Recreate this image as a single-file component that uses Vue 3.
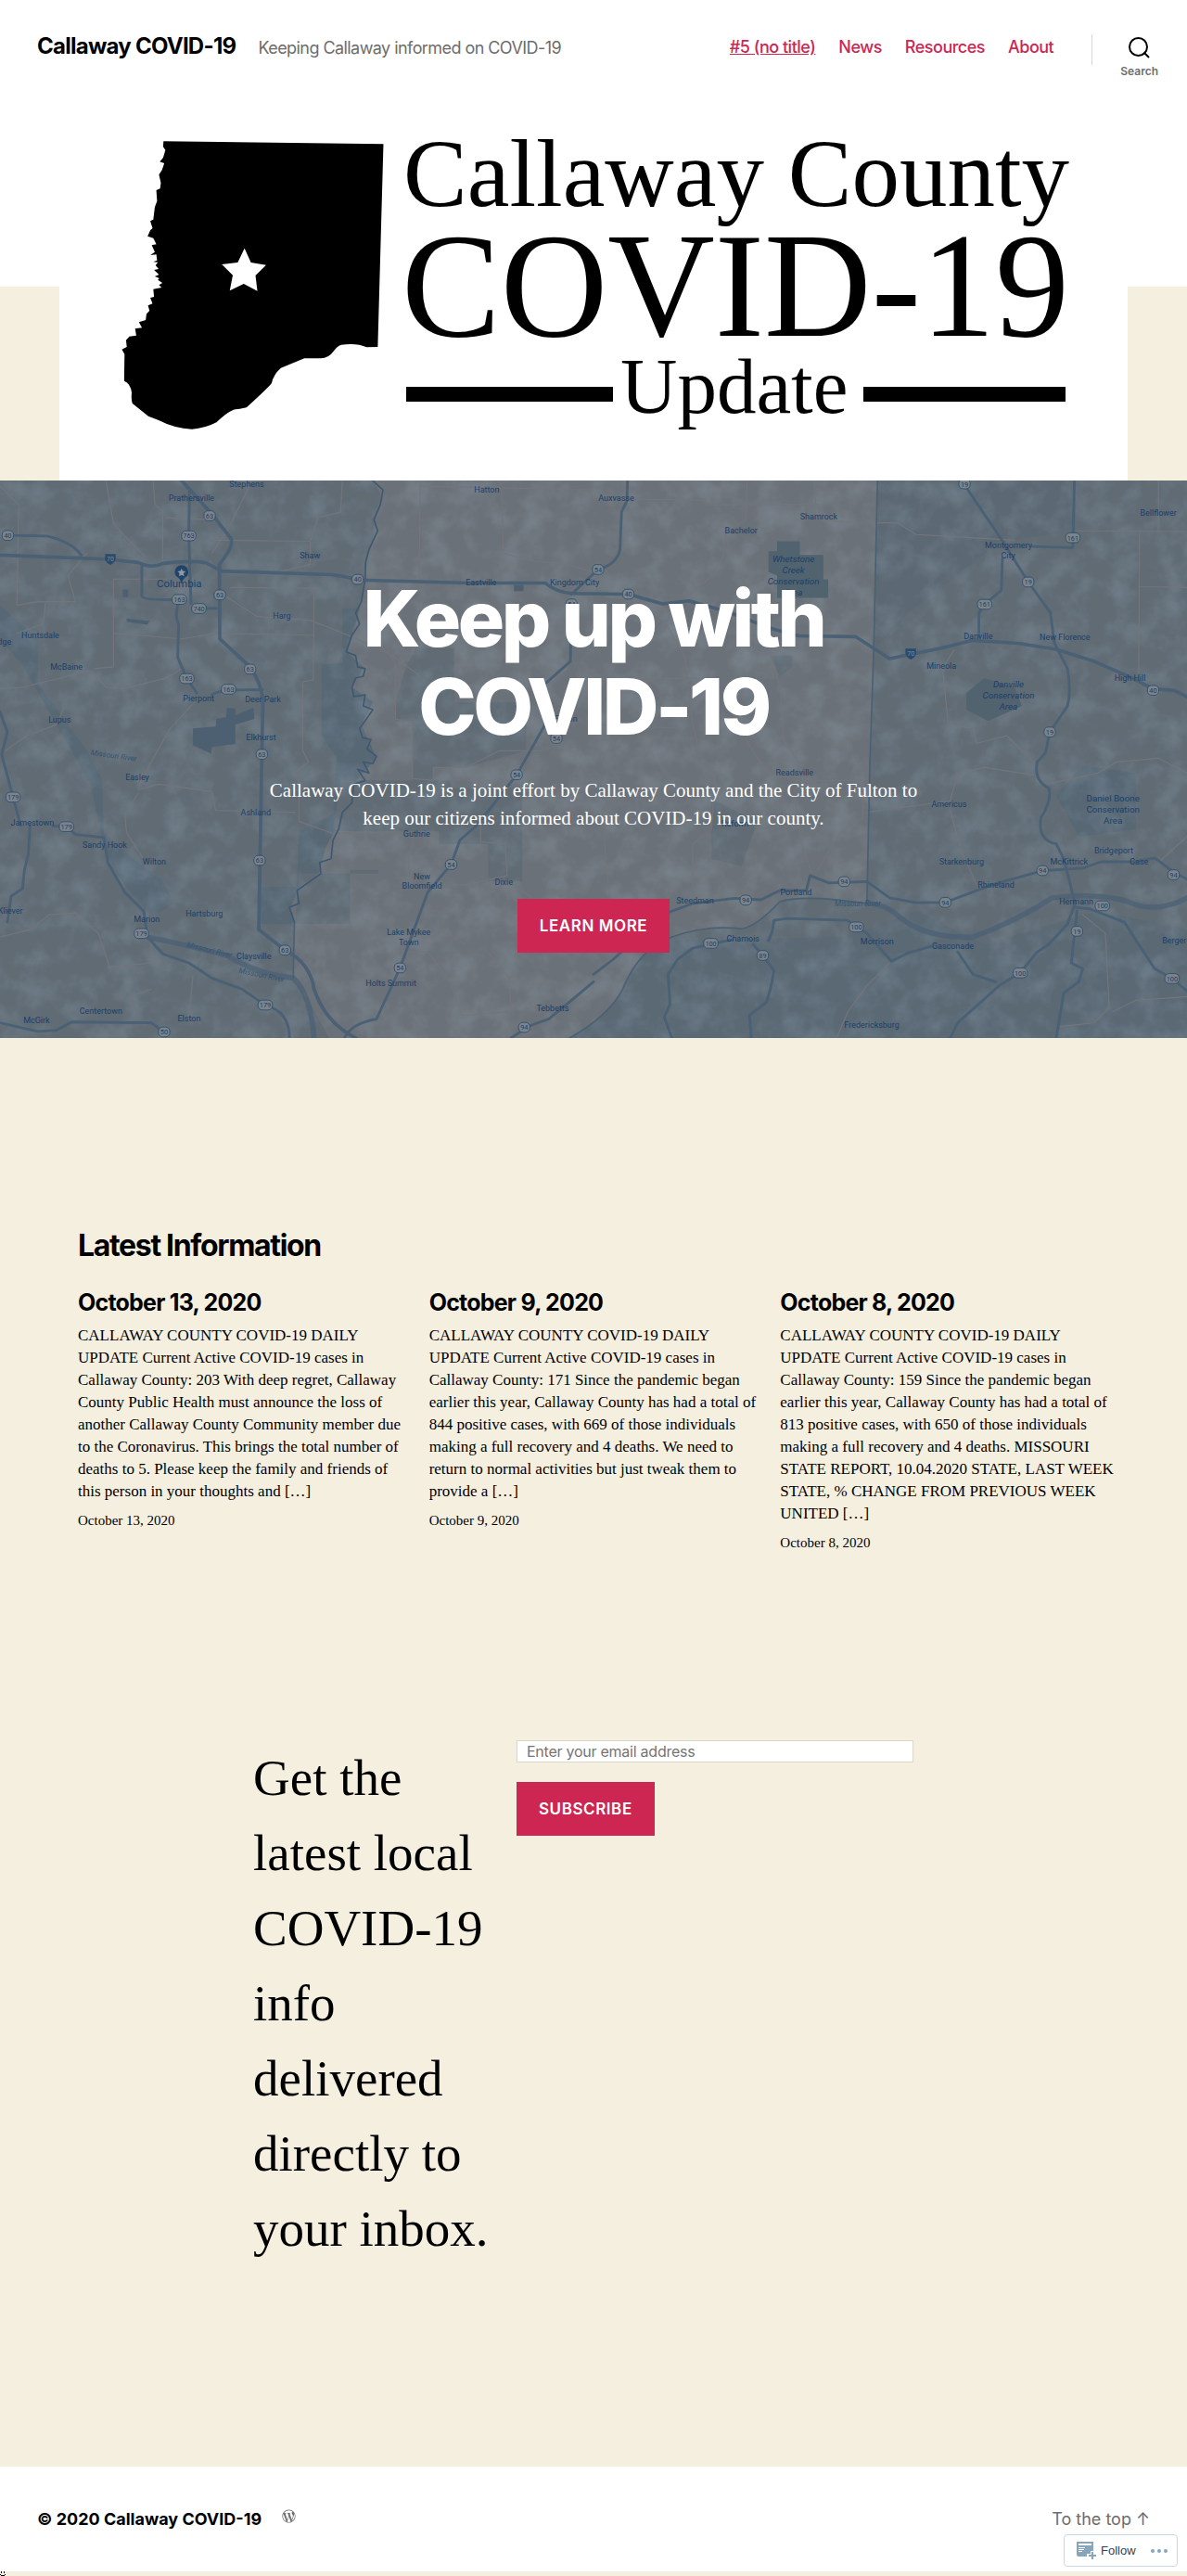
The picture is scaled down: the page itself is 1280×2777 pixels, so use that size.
<script setup>
const navLinks = [
  { text: '#5 (no title)', current: true },
  { text: 'News' },
  { text: 'Resources' },
  { text: 'About' },
]

const posts = [
  {
    title: 'October 13, 2020',
    excerpt:
      'CALLAWAY COUNTY COVID-19 DAILY UPDATE Current Active COVID-19 cases in Callaway County: 203 With deep regret, Callaway County Public Health must announce the loss of another Callaway County Community member due to the Coronavirus. This brings the total number of deaths to 5. Please keep the family and friends of this person in your thoughts and […]',
  },
  {
    title: 'October 9, 2020',
    excerpt:
      'CALLAWAY COUNTY COVID-19 DAILY UPDATE Current Active COVID-19 cases in Callaway County: 171 Since the pandemic began earlier this year, Callaway County has had a total of 844 positive cases, with 669 of those individuals making a full recovery and 4 deaths. We need to return to normal activities but just tweak them to provide a […]',
  },
  {
    title: 'October 8, 2020',
    excerpt:
      'CALLAWAY COUNTY COVID-19 DAILY UPDATE Current Active COVID-19 cases in Callaway County: 159 Since the pandemic began earlier this year, Callaway County has had a total of 813 positive cases, with 650 of those individuals making a full recovery and 4 deaths. MISSOURI STATE REPORT, 10.04.2020 STATE, LAST WEEK STATE, % CHANGE FROM PREVIOUS WEEK UNITED […]',
  },
]

/* Latitude on the map sheet to a y inside the drawing */
const lat = (y) => Math.round((y - 45) * 0.984)

/* Map data: [text, centre x, baseline y] in map units */
const towns = [
  ['Stephens', 652, 62], ['Prathersville', 506, 101], ['Shaw', 819, 254], ['Hatton', 1286, 79],
  ['Eastville', 1271, 326], ['Kingdom City', 1518, 326], ['Harg', 745, 416], ['Huntsdale', 107, 468],
  ['dge', 12, 486], ['McBaine', 176, 553], ['Pierpont', 525, 638], ['Deer Park', 695, 641],
  ['Lupus', 158, 695], ['Elkhurst', 690, 741], ['Fulton', 1495, 693], ['Easley', 363, 848],
  ['Ashland', 676, 942], ['Jamestown', 86, 972], ['Guthrie', 1101, 1001], ['Sandy Hook', 277, 1030],
  ['Wilton', 408, 1076], ['New', 1115, 1115], ['Bloomfield', 1115, 1140], ['Dixie', 1331, 1131],
  ['Kliever', 28, 1207], ['Marion', 388, 1230], ['Hartsburg', 540, 1215], ['Lake Mykee', 1080, 1266],
  ['Town', 1080, 1291], ['Claysville', 671, 1330], ['Holts Summit', 1033, 1402], ['Tebbetts', 1460, 1470],
  ['Centertown', 267, 1476], ['McGirk', 97, 1502], ['Elston', 500, 1496],
  ['Auxvasse', 1628, 101], ['Bachelor', 1958, 186], ['Shamrock', 2163, 151], ['Montgomery', 2664, 228],
  ['City', 2663, 254], ['Bellflower', 3060, 139], ['Danville', 2584, 471], ['New Florence', 2813, 473],
  ['Mineola', 2487, 549], ['High Hill', 2985, 582], ['Readsville', 2099, 836], ['Americus', 2507, 921],
  ['Reform', 1942, 973], ['Starkenburg', 2540, 1074], ['McKittrick', 2824, 1076], ['Bridgeport', 2942, 1046],
  ['Case', 3009, 1076], ['Rhineland', 2631, 1136], ['Portland', 2103, 1158], ['Steedman', 1836, 1181],
  ['Hermann', 2843, 1183], ['Chamois', 1963, 1283], ['Morrison', 2317, 1289], ['Gasconade', 2517, 1303],
  ['Berger', 3102, 1286], ['Fredericksburg', 2303, 1514],
]
const areas = [
  ['Whetstone', 2096, 264], ['Creek', 2096, 294], ['Conservation', 2096, 323], ['Area', 2096, 353],
  ['Danville', 2664, 599], ['Conservation', 2664, 629], ['Area', 2664, 659],
]
const boone = [['Daniel Boone', 2940, 907], ['Conservation', 2940, 937], ['Area', 2940, 967]]
const shields = [
  ['63', 554, 140], ['763', 499, 193], ['40', 21, 192], ['40', 945, 310], ['163', 474, 364], ['740', 526, 388],
  ['63', 581, 352], ['63', 661, 551], ['163', 494, 576], ['163', 604, 605], ['63', 692, 780], ['54', 1470, 737],
  ['54', 1365, 835], ['179', 35, 895], ['179', 176, 974], ['63', 686, 1064], ['54', 1192, 1075], ['179', 374, 1260],
  ['63', 753, 1305], ['54', 1057, 1353], ['179', 701, 1453], ['50', 434, 1525], ['94', 1385, 1512], ['54', 1510, 376],
  ['54', 1580, 284], ['40', 1660, 350], ['19', 2548, 54], ['161', 2834, 198], ['19', 2716, 317], ['161', 2601, 377],
  ['40', 3046, 608], ['19', 2773, 720], ['94', 2754, 1092], ['94', 3100, 1103], ['94', 2230, 1121], ['94', 1970, 1171],
  ['94', 2497, 1177], ['100', 2912, 1186], ['100', 2262, 1243], ['19', 2845, 1254], ['100', 1878, 1287],
  ['89', 2015, 1319], ['100', 2695, 1366], ['100', 3096, 1381],
]
const interstates = [[292, 256], [2406, 510]]

/* Main highways */
const highways = [
  'M0 245 L280 256 L365 265 Q400 282 430 268 Q500 258 545 266 L585 288 L860 297 Q900 298 945 312 L1240 320 L1440 320 Q1470 345 1510 348 L1660 350 L1750 376 L1820 368 L1930 400 L2030 440 L2110 462 L2260 464 L2350 523 L2480 496 L2570 474 L2690 482 L2790 498 L2890 530 L2990 575 L3046 604 L3100 608 L3136 625',
  'M480 45 L560 135 L610 200 Q620 220 580 270 L581 470 L661 545 Q692 590 695 640 L692 780 L684 1250 L753 1305 Q820 1340 830 1410 Q860 1500 940 1541',
]
const roads = [
  'M21 192 L125 194 Q190 210 215 245', 'M501 75 L499 193 L505 375', 'M375 268 L375 355 Q380 368 474 364',
  'M474 364 Q460 410 472 430 L470 520 L494 576 L520 615', 'M580 388 L526 388', 'M560 620 Q580 604 694 607',
  'M1510 376 L1507 530 L1430 600 L1440 700 L1365 835 L1260 970 L1215 1010 L1192 1075 L1130 1150 L1057 1353 L995 1490 Q930 1500 910 1541',
  'M1658 45 L1656 100 L1642 130 L1638 230 Q1630 270 1580 284 L1510 350',
  'M0 665 L20 720 L5 780 L35 895 L55 970', 'M80 970 L75 1050 L65 1090 L60 1140 L30 1160 L20 1230',
  'M140 972 L176 974 L200 995 L275 1003 L285 1070 L330 1150 L380 1200 L390 1270 L430 1315 L500 1340 L560 1380 L640 1410 L701 1453 Q765 1470 765 1541',
  'M0 1500 L100 1523 L150 1520 L190 1498 L400 1500 L434 1525',
  'M2540 45 L2650 210 L2716 317 L2775 400 L2785 480 L2820 550 Q2830 610 2820 650 L2773 720 L2762 775 L2740 800 Q2730 850 2770 870 Q2780 900 2750 950 Q2740 1010 2790 1020 L2810 1060 L2840 1180 L2820 1235 L2770 1290 L2740 1310 L2695 1366 L2640 1400 L2530 1500 L2510 1541',
  'M2838 45 L2834 225 L2728 222', 'M2648 255 L2645 340 L2601 377 L2586 400 L2586 465',
  'M1568 1370 L1620 1330 L1750 1210 L1830 1180 L1940 1166 L2010 1170 L2060 1145 L2130 1145 L2140 1105 L2190 1125 L2290 1121 L2350 1165 L2420 1178 L2497 1177 L2620 1130 L2754 1092 L2860 1085 L2910 1068 L3000 1068 L3050 1058 L3100 1095 L3136 1115',
  'M2030 1280 L2040 1255 L2045 1225 L2080 1220 L2240 1225 L2262 1243 L2290 1260 L2355 1335 L2400 1312 L2460 1295',
  'M2530 1310 L2570 1370 L2630 1390 M2840 1190 L2880 1195 L2970 1230 L3050 1355 L3096 1381 L3136 1415',
  'M1990 1290 L2015 1319 L2045 1360 L2035 1410 L2025 1445 L1980 1480 L1985 1541',
  'M1935 1277 L1830 1300 L1790 1330 L1765 1370 L1770 1450 L1755 1485 L1775 1541',
  'M2845 1200 L2830 1340 L2860 1355 L2850 1390 L2810 1420 L2790 1541', 'M1350 1541 L1400 1508 L1450 1490 L1510 1440 L1568 1390',
]
const lanes = [
  'M0 60 L50 110 L45 380 L100 370 L200 370 L180 300 L230 240', 'M280 45 L300 160 L345 210 L380 245', 'M405 45 L410 110 L430 125 L430 265',
  'M440 145 L560 150', 'M660 60 L600 180 L560 240 M560 205 L820 208 L840 145 L900 130 L905 45', 'M820 208 L820 270 L740 290',
  'M600 358 L680 410 L820 420 L920 460 L1030 510 L1110 570 M610 332 L830 334 L828 580 L800 585 L800 770 L815 800 L790 820 L790 960 L880 992 L1090 988',
  'M250 550 L300 545 L300 310 L440 310 M300 455 L480 470 L570 455 L828 460', 'M120 375 L115 430 L45 455 M0 605 L60 600 L240 555 L280 600 L330 603 L440 575 L480 550 M510 645 L450 710 L400 800 L365 870 M15 770 L70 730 L150 700 L175 640',
  'M365 875 L420 860 L560 880 L570 930 L780 935 M365 885 L330 940 L335 990 L385 1070', 'M1110 45 L1108 310 M1325 68 L1330 240 L1400 260 L1500 270 L1560 290',
  'M1110 60 L1560 70 M1030 510 L1045 540 L1045 685 L1090 695 L1090 845 L1145 850 L1145 815 L1230 815 L1320 770 L1430 770',
  'M1095 990 L1080 1060 L1080 1100 M1160 1130 L1230 1130 L1340 1105 L1335 1020 L1270 1015 L1270 970 M1350 1125 L1400 1160 L1440 1240 L1500 1300',
  'M1110 1195 L1160 1200 L1160 1250 L1230 1290 M1070 1310 L1130 1310 L1190 1390 L1220 1480 L1350 1470 L1345 1380 L1280 1300',
  'M0 1270 L80 1250 L130 1210 L200 1205 L260 1260 L290 1350 L400 1340 L400 1280 M350 1470 L345 1430 L400 1410 M510 1375 L500 1480',
  'M1568 95 L1850 97 L1880 110 L2160 108 L2170 150 L2270 160 L2370 158 L2420 190 L2680 205',
  'M1974 45 L1970 150 L1918 185 L1910 250 L1870 310 L1770 400 L1760 430 L1810 520 L1830 700 L1850 780 L1890 830 L1880 980 L1830 1020 L1830 1160',
  'M2150 45 L2155 108 M2035 500 L2060 600 L2070 740 L2110 800 L2100 900 L2115 1010 L2145 1100 M1970 740 L2020 820 L2100 850 L2280 850 L2280 950 L2220 990 L2160 1090',
  'M1568 580 L1840 575 M1568 700 L1800 710 M1568 740 L1640 860 L1590 930 L1610 1160',
  'M2290 935 L2510 905 L2530 830 L2600 815 L2730 835 M2510 930 L2540 1040 L2580 1130 M2520 500 L2490 550 L2505 700 L2570 710 L2580 750 L2660 730 L2730 800',
  'M2840 180 L3136 182 M3010 182 L3008 560 M3060 45 L3060 182 M3008 330 L3136 332 M2765 860 L2900 830 L2950 800 L3060 790 L3136 830 M3136 1000 L3060 1070',
  'M2860 1210 L2920 1260 L2930 1460 L2890 1500 L2800 1510 M2350 1340 L2290 1400 L2240 1470 L2210 1541 M2940 1470 L3000 1440 L3136 1430',
]
</script>

<template>
  <div class="page">
    <header class="site-header">
      <div class="branding">
        <a class="site-title" href="#">Callaway COVID-19</a>
        <span class="tagline">Keeping Callaway informed on COVID-19</span>
      </div>
      <div class="header-side">
        <nav class="nav" aria-label="Main">
          <a v-for="link in navLinks" :key="link.text" href="#" :class="{ current: link.current }">{{ link.text }}</a>
        </nav>
        <button class="search" type="button">
          <svg viewBox="0 0 23 23" width="23" height="23" aria-hidden="true">
            <circle cx="10.5" cy="10.5" r="9.5" fill="none" stroke="#000" stroke-width="2" />
            <path d="M16.5 16.5 L22 22" stroke="#000" stroke-width="2" />
          </svg>
          <span>Search</span>
        </button>
      </div>
    </header>

    <div class="banner">
      <svg class="logo" viewBox="0 0 1152 418" role="img" aria-label="Callaway County COVID-19 Update">
        <rect width="1152" height="418" fill="#fff" />
        <g transform="translate(-4 20) scale(.40816 .33333)">
          <path
            d="M285 97 L866 106 L851 762 L822 763 Q795 748 755 755 Q745 757 733 778 Q722 798 700 799 L657 799 L595 830 Q575 852 571 878 Q568 886 505 957 Q500 960 470 965 Q450 975 425 1006 Q395 1025 360 1028 Q315 1026 272 999 L245 986 L203 945 Q199 935 201 910 Q198 880 181 872 L182 785 L175 770 L188 762 L186 740 L195 728 L213 725 L210 703 L228 700 L220 682 L238 675 L240 655 L248 645 L244 628 L256 622 L250 603 L260 600 L258 575 L280 570 L273 562 L282 555 L270 545 L274 540 L262 534 L273 528 L260 513 L272 510 L264 498 L270 488 L258 487 L268 482 L266 463 L250 465 L262 455 L254 433 L266 430 L258 410 L243 404 L250 385 L256 378 L250 355 L258 350 L262 310 L268 290 L266 255 L276 250 L278 232 L273 205 L281 190 L287 168 L275 163 L284 150 L290 125 L284 115 Z"
          />
          <path fill="#fff" d="M499 443 L516 489 L556 497 L528 531 L533 581 L497 558 L460 580 L468 530 L439 495 L481 489 Z" />
        </g>
        <g class="logo-text">
          <text x="371" y="122" font-size="103">Callaway County</text>
          <text x="369" y="262" font-size="160">COVID-19</text>
          <text x="605" y="345" font-size="85">Update</text>
        </g>
        <path d="M374 317 H597 V333 H374 Z M867 317 H1085 V333 H867 Z" />
      </svg>
    </div>

    <section class="hero">
      <svg class="map" viewBox="0 0 3136 1472" preserveAspectRatio="xMidYMid slice" aria-hidden="true">
        <defs>
          <filter id="woods" x="0" y="0" width="100%" height="100%">
            <feTurbulence type="fractalNoise" baseFrequency="0.016" numOctaves="5" seed="8" />
            <feColorMatrix values="0 0 0 0 .29  0 0 0 0 .38  0 0 0 0 .46  2 0 0 0 -.8" />
          </filter>
        </defs>
        <rect width="3136" height="1472" fill="#606b74" />
        <g transform="scale(1 .984) translate(0 -45)">
          <path
            fill="#6b7178"
            d="M985 45 L1010 90 L990 150 L985 210 L970 260 L955 370 L940 430 L915 505 L960 545 L930 600 L985 640 L955 700 L995 790 L940 850 L915 930 L860 1030 L840 1110 L785 1150 L765 1195 L778 1230 L775 1380 L815 1440 L870 1541 L1505 1541 Q1610 1480 1645 1410 Q1680 1320 1750 1280 Q1850 1235 1960 1248 Q2000 1240 2060 1175 Q2120 1155 2290 1180 L2300 800 L2308 500 L2318 45 Z"
          />
          <g fill="#576774">
            <path d="M0 380 L100 470 L100 590 L230 770 L270 850 L275 990 L340 1050 L430 1120 L460 1180 L400 1215 L330 1130 L280 1050 L240 860 L150 700 L60 540 L0 470 Z" />
            <path d="M850 540 L905 535 L905 390 L950 390 L915 505 L960 545 L930 600 L985 640 L955 700 L995 790 L940 850 L915 930 L860 1030 L840 1110 L785 1150 L765 1195 L778 1235 L687 1235 L687 1135 L785 1135 L790 985 L880 940 L890 790 L850 730 Z" />
            <path d="M2790 890 L2860 810 L3000 830 L3000 980 L2850 1000 Z" />
            <path d="M1505 1541 Q1610 1480 1645 1410 Q1680 1320 1750 1280 L2230 1270 L2420 1200 L2600 1290 L2900 1200 L3136 1250 V1541 Z" opacity=".6" />
            <path d="M2318 45 H2840 V180 L2640 210 L2400 400 L2308 500 Z" opacity=".5" />
          </g>
          <g fill="#606b74">
            <path d="M1100 495 H1200 V640 H1390 V770 L1230 815 L1145 815 V850 H1090 V690 H1045 V640 L1075 540 Z M1160 870 H1380 V1120 H1290 V1020 H1160 Z M790 1100 H1000 V1090 H925 V1235 H780 Z M900 850 H1190 V985 H880 Z" />
            <path d="M2035 515 H2093 V545 L2060 570 Z M1880 900 L2000 960 L1960 1080 L1880 1060 Z" />
          </g>
        </g>
        <rect width="3136" height="1472" filter="url(#woods)" opacity=".3" />
        <g transform="scale(1 .984) translate(0 -45)">
          <path fill="#50636f" d="M2053 208 H2113 V245 H2175 V310 H2188 V360 H2053 V300 L2030 290 V235 H2053 Z M2553 615 L2600 575 L2680 600 L2700 650 L2610 690 L2553 660 Z" />
          <path fill="#4d6071" d="M510 710 L570 705 L572 685 L598 680 L600 655 L622 657 L622 675 L670 655 L672 685 L622 700 L622 752 L560 760 L558 778 L510 755 Z M325 338 h14 v20 h-14 Z M335 415 L395 422 L390 432 L335 424 Z M1358 325 h25 v17 h-25 Z" />
          <g fill="none" stroke-linejoin="round" stroke-linecap="round">
            <path v-for="(d, i) in lanes" :key="'l' + i" :d="d" stroke="#73757b" stroke-width="3" />
            <g stroke="#4a6075">
              <path stroke-width="14" opacity=".7" d="M390 1270 Q490 1290 600 1320 Q680 1370 775 1380 Q820 1420 830 1541 M2290 1180 Q2340 1180 2380 1220 Q2450 1275 2570 1270 Q2680 1230 2780 1165 Q2900 1150 2980 1175 Q3050 1210 3136 1165" />
              <path stroke-width="4" d="M1505 1541 Q1610 1480 1645 1410 Q1680 1320 1750 1280 Q1850 1235 1960 1248 Q2000 1240 2060 1175 Q2120 1155 2290 1180 M2318 45 L2308 500 L2298 800 L2290 1180 M778 1230 L775 1380" />
              <path stroke-width="4" stroke="#3e5870" d="M985 45 Q1000 60 1012 70 L1005 110 L988 150 L998 180 L975 230 L966 265 L965 310 L955 370 L940 400 L950 430 L930 460 L915 505 L940 515 L945 545 L965 550 L960 570 L940 575 L930 600 L935 625 L965 620 L960 650 L985 660 L965 690 L950 710 L958 735 L980 740 L970 765 L995 785 L985 805 L960 800 L975 830 L945 820 L965 850 L935 860 L930 910 L905 935 L895 980 L880 1010 L875 1060 L845 1070 L848 1100 L820 1120 L785 1145 L790 1180 L765 1190 L778 1230" />
              <path v-for="(d, i) in roads" :key="'r' + i" :d="d" stroke-width="7" />
              <path v-for="(d, i) in highways" :key="'h' + i" :d="d" stroke-width="9" />
            </g>
          </g>
        </g>
        <g class="map-text">
          <g v-for="([num, x, y], i) in shields" :key="'s' + i">
            <rect :x="x - (num.length > 2 ? 19 : 15)" :y="lat(y) - 13" :width="num.length > 2 ? 38 : 30" height="26" rx="11" fill="#7b848b" stroke="#2a4a6b" stroke-width="2" />
            <text :x="x" :y="lat(y) + 7" font-size="18">{{ num }}</text>
          </g>
          <g v-for="([x, y], i) in interstates" :key="'i' + i">
            <path :transform="`translate(${x} ${lat(y)})`" fill="#294b6d" d="M-14 -14 H14 V0 Q12 8 0 15 Q-12 8 -14 0 Z" />
            <text :x="x" :y="lat(y) + 6" font-size="17" class="shield-light">70</text>
          </g>
          <text v-for="([name, x, y], i) in towns" :key="'t' + i" :x="x" :y="lat(y)" font-size="22">{{ name }}</text>
          <g class="italic">
            <text v-for="([name, x, y], i) in areas" :key="'a' + i" :x="x" :y="lat(y)" font-size="24">{{ name }}</text>
          </g>
          <text v-for="([name, x, y], i) in boone" :key="'b' + i" :x="x" :y="lat(y)" font-size="24">{{ name }}</text>
          <text x="474" y="282" font-size="28">Columbia</text>
          <g class="river">
            <text transform="translate(300 733) rotate(8)" font-size="20">Missouri River</text>
            <text transform="translate(552 1246) rotate(14)" font-size="20">Missouri River</text>
            <text transform="translate(690 1312) rotate(12)" font-size="20">Missouri River</text>
            <text x="2266" y="1124" font-size="20">Missouri River</text>
          </g>
        </g>
        <g transform="translate(0 -48)">
          <path fill="#1f4469" d="M480 322 Q478 308 466 301 A18 18 0 1 1 494 301 Q482 308 480 322 Z" />
          <path fill="#929aa0" d="M480 280 l3 7 8 1 -6 5 2 8 -7 -4 -7 4 2 -8 -6 -5 8 -1 Z" />
        </g>
      </svg>
      <div class="hero-content">
        <h1>Keep up with COVID-19</h1>
        <p>Callaway COVID-19 is a joint effort by Callaway County and the City of Fulton to keep our citizens informed about COVID-19 in our county.</p>
        <a class="button" href="#">Learn More</a>
      </div>
    </section>

    <main>
      <section class="latest">
        <h2>Latest Information</h2>
        <div class="posts">
          <article v-for="post in posts" :key="post.title">
            <h3>{{ post.title }}</h3>
            <p>{{ post.excerpt }}</p>
            <time>{{ post.title }}</time>
          </article>
        </div>
      </section>

      <section class="signup">
        <p class="pitch">Get the latest local COVID-19 info delivered directly to your inbox.</p>
        <form class="signup-form" @submit.prevent>
          <input type="email" placeholder="Enter your email address" aria-label="Enter your email address" />
          <button class="button" type="submit">Subscribe</button>
        </form>
      </section>
    </main>

    <footer class="site-footer">
      <div class="credits">
        <a class="copyright" href="#">© 2020 Callaway COVID-19</a>
        <a class="wp" href="#" aria-label="WordPress">
          <svg viewBox="0 0 24 24" width="17" height="17" aria-hidden="true">
            <path
              fill="#6d6d6d"
              d="M12.158 12.786l-2.698 7.84a9 9 0 0 0 5.526-.144.852.852 0 0 1-.065-.124zM3.009 12a8.993 8.993 0 0 0 5.067 8.092L3.788 8.341A8.95 8.95 0 0 0 3.009 12zm15.06-.454c0-1.112-.399-1.881-.741-2.48-.456-.741-.883-1.368-.883-2.109 0-.826.627-1.596 1.51-1.596.04 0 .078.005.116.007A8.963 8.963 0 0 0 12 3.009a8.982 8.982 0 0 0-7.505 4.052c.211.007.41.011.579.011.94 0 2.396-.114 2.396-.114.484-.029.541.684.057.741 0 0-.487.057-1.029.085l3.274 9.739 1.968-5.901-1.401-3.838c-.484-.028-.943-.085-.943-.085-.485-.029-.428-.769.057-.741 0 0 1.484.114 2.368.114.94 0 2.397-.114 2.397-.114.485-.028.542.684.057.741 0 0-.488.057-1.029.085l3.249 9.665.897-2.996c.456-1.169.684-2.137.684-2.907zm1.82-3.86c.039.286.06.593.06.924 0 .912-.171 1.938-.684 3.22l-2.746 7.94a8.99 8.99 0 0 0 3.37-12.084zM12 22C6.486 22 2 17.514 2 12S6.486 2 12 2s10 4.486 10 10-4.486 10-10 10z"
            />
          </svg>
        </a>
      </div>
      <a class="to-top" href="#">To the top ↑</a>
    </footer>

    <div class="follow-bar">
      <button class="follow" type="button">
        <svg viewBox="0 0 22 20" width="22" height="20" aria-hidden="true">
          <path fill="#87a6bc" d="M0 0 H18 V10 H15 V13 H11 V16 H2 Q0 16 0 14 Z M16 11 H18 V14 H21 V16 H18 V19 H16 V16 H13 V14 H16 Z" />
          <path fill="#fff" d="M2 2 H16 V4 H2 Z M2 6 H9 V7 H2 Z M2 8 H8 V9 H2 Z M2 10 H6 V11 H2 Z" />
        </svg>
        Follow
      </button>
      <button class="more" type="button" aria-label="More options">
        <svg viewBox="0 0 18 4" width="18" height="4" aria-hidden="true">
          <g fill="#87a6bc"><circle cx="2" cy="2" r="2" /><circle cx="9" cy="2" r="2" /><circle cx="16" cy="2" r="2" /></g>
        </svg>
      </button>
    </div>
    <svg class="stats" viewBox="0 0 6 5" width="6" height="5" aria-hidden="true">
      <path d="M1 0h1v2H1Z M4 0h1v2H4Z M0 3h1v1H0Z M1 4h4v1H1Z M5 3h1v1H5Z" />
    </svg>
  </div>
</template>

<style>
body {
  margin: 0;
  background: #f5efe0;
}
</style>

<style scoped>
.page {
  position: relative;
  padding-bottom: 5px;
  background: #f5efe0;
  color: #000;
  font-family: "Liberation Serif", "Times New Roman", serif;
}
.page * {
  box-sizing: border-box;
}
h1, h2, h3, p {
  margin: 0;
}
a {
  color: inherit;
  text-decoration: none;
}
.site-header, .site-footer, h1, h2, h3, .button, input, .search {
  font-family: Inter, sans-serif;
}
.site-header {
  display: flex;
  justify-content: space-between;
  height: 100px;
  padding: 0 31px 0 40px;
  background: #fff;
}
.branding {
  display: flex;
  align-items: baseline;
  gap: 24px;
  padding-top: 35px;
}
.site-title {
  font-size: 24px;
  line-height: 30px;
  font-weight: 700;
  letter-spacing: -0.0311em;
}
.tagline {
  color: #6d6d6d;
  font-size: 18px;
  letter-spacing: -0.0311em;
}
.header-side {
  display: flex;
  align-items: flex-start;
}
.nav {
  display: flex;
  gap: 25px;
  height: 33px;
  margin-top: 37px;
  padding: 3px 41px 0 0;
  border-right: 1px solid #dcd7ca;
  color: #cd2653;
  font-size: 18px;
  font-weight: 500;
  line-height: 22px;
  letter-spacing: -0.0277em;
}
.nav .current {
  text-decoration: underline;
}
.search {
  display: flex;
  flex-direction: column;
  align-items: center;
  gap: 6px;
  margin-top: 40px;
  padding: 0 0 0 30px;
  border: 0;
  background: none;
  color: #6d6d6d;
  font-size: 12px;
  font-weight: 600;
  line-height: 16px;
}
.banner {
  padding: 0 5%;
  background: linear-gradient(#fff 50%, #f5efe0 50%);
}
.logo {
  display: block;
  width: 100%;
}
.logo-text {
  font-family: "Liberation Serif", serif;
}
.hero {
  position: relative;
  padding: 101px 40px 92px;
  overflow: hidden;
  color: #fff;
}
.map {
  position: absolute;
  inset: 0;
  width: 100%;
  height: 100%;
}
.map-text {
  fill: #1c4068;
  font-family: Roboto, sans-serif;
  text-anchor: middle;
}
.italic {
  font-style: italic;
}
.river {
  fill: #36546f;
  font-style: italic;
}
.shield-light {
  fill: #7f8b95;
}
.hero-content {
  position: relative;
  display: flex;
  flex-direction: column;
  align-items: center;
  max-width: 700px;
  margin: 0 auto;
  text-align: center;
}
h1 {
  max-width: 580px;
  font-size: 84px;
  line-height: 95px;
  font-weight: 800;
  letter-spacing: -0.0416em;
}
.hero p {
  margin-top: 28px;
  font-size: 21px;
  line-height: 30px;
}
.button {
  display: block;
  padding: 19px 24px;
  border: 0;
  background: #cd2653;
  color: #fff;
  font-size: 17px;
  font-weight: 600;
  line-height: 20px;
  letter-spacing: 0.0333em;
  text-transform: uppercase;
}
.hero .button {
  margin-top: 72px;
}
.latest {
  max-width: 1120px;
  margin: 0 auto;
  padding: 204px 36px 0 44px;
  box-sizing: content-box;
}
h2 {
  font-size: 32px;
  line-height: 40px;
  font-weight: 700;
  letter-spacing: -0.0416em;
}
.posts {
  display: grid;
  grid-template-columns: repeat(3, 1fr);
  gap: 16px;
  margin-top: 26px;
}
h3 {
  font-size: 25px;
  line-height: 30px;
  font-weight: 700;
  letter-spacing: -0.0311em;
}
.posts p {
  margin-top: 9px;
  font-size: 17px;
  line-height: 24px;
}
.posts time {
  display: block;
  margin-top: 7px;
  font-size: 15px;
  line-height: 24px;
}
.signup {
  display: flex;
  gap: 24px;
  max-width: 734px;
  margin: 0 auto;
  padding: 201px 0 216px;
}
.pitch {
  flex: 0 0 260px;
  font-size: 55px;
  line-height: 81px;
}
.signup-form {
  flex: 1;
  display: flex;
  flex-direction: column;
  align-items: flex-start;
  gap: 21px;
}
.signup-form input {
  width: 95%;
  height: 24px;
  padding: 0 10px;
  border: 1px solid #dcd7ca;
  border-radius: 0;
  background: #fff;
  font-size: 16px;
  letter-spacing: -0.0156em;
}
.signup-form input::placeholder {
  color: #757575;
}
.site-footer {
  display: flex;
  align-items: center;
  justify-content: space-between;
  height: 113px;
  padding: 0 40px;
  background: #fff;
  font-size: 18px;
  line-height: 24px;
}
.credits {
  display: flex;
  gap: 21px;
}
.copyright {
  font-weight: 700;
}
.wp svg {
  display: block;
}
.to-top {
  color: #6d6d6d;
}
.follow-bar {
  position: fixed;
  right: 10px;
  bottom: 10px;
  display: flex;
  align-items: center;
  justify-content: space-between;
  width: 123px;
  height: 35px;
  padding: 0 10px 0 13px;
  border: 1px solid #c8d7e1;
  border-radius: 4px;
  background: #fff;
}
.follow, .more {
  display: flex;
  align-items: center;
  gap: 4px;
  padding: 0;
  border: 0;
  background: none;
  color: #2e4453;
  font-family: "Liberation Sans", Arial, sans-serif;
  font-size: 13px;
}
.stats {
  position: absolute;
  left: 0;
  bottom: 0;
}
</style>
